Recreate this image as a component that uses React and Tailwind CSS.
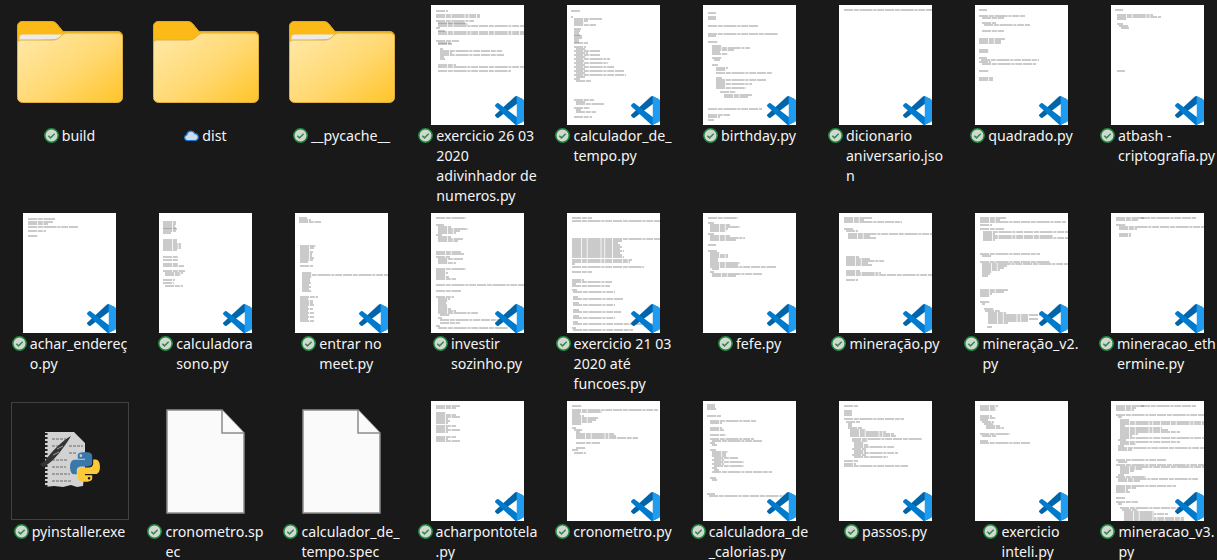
const thumbs = {
    ex26: '5 6 12;5 10 44;5 12 44;5 16 38;7 18 27;7 19 30;7 21 90;5 23 4;7 26 7;7 27 86;7 29 86;5 36 23;7 38 13;7 39 14;9 44 3;9 46 62;9 48 12;9 50 64;9 52 4;9 54 5;7 60 18;7 62 86;7 66 73',
    calcTempo: '4 6 9;4 12 2;7 14 28;7 16 14;7 18 10;7 20 22;7 24 7;7 26 6;7 28 5;7 30 6;7 31 8;7 33 8;7 35 5;7 37 5;7 38 14;7 42 12;9 44 10;7 46 26;9 48 12;7 50 26;9 52 10;7 54 36;9 56 8;7 58 34;9 60 9;7 62 40;9 64 9;7 66 50;9 68 9;7 70 52;9 72 9;7 74 6;9 76 15;7 95 20;9 97 10;9 99 28;7 103 16;9 105 5;9 107 20;7 112 18',
    birthday: '5 8 8;5 12 8;5 14 8;5 21 50;5 29 70;5 31 8;5 37 10;9 41 10;9 43 38;9 45 22;9 47 8;9 49 16;9 53 10;11 55 6;9 60 6;13 63 12;13 65 10;13 68 56;13 73 6;13 75 50;13 77 10;13 79 36;13 81 10;13 83 30;17 87 16;21 90 28;21 92 24;5 104 54;5 110 22;5 112 12;5 115 6',
    dic: '5 5 93',
    quadrado: '4 5 8;4 11 46;7 13 22;7 18 14;9 20 46;7 26 22;4 34 26;4 36 22;4 38 22;4 45 10;4 47 10;4 53 8;6 55 58;4 57 12;7 59 54;4 66 10;4 73 14;4 75 14',
    atbash: '4 5 8;6 10 36;6 12 44;6 14 10;6 19 6;8 21 10;10 23 8;6 66 8',
    achar: '5 6 27;5 9 25;5 11 20;5 14 50;5 18 18;5 23 10',
    sono: '4 9 13;4 11 13;4 13 12;4 15 13;4 16 14;4 18 13;4 20 8;4 27 14;4 29 14;4 31 18;4 33 18;4 35 18;4 37 14;4 44 15;4 47 15;4 51 15;4 53 21;4 58 22;6 60 18;6 62 16;4 67 12;4 70 11;6 73 18',
    meet: '4 5 8;4 7 12;4 9 22;5 33 16;5 35 14;5 37 10;5 39 13;5 41 12;5 43 12;5 45 14;5 47 13;5 49 8;5 53 13;7 60 10;7 62 88;7 64 10;7 66 8;7 68 8;7 70 9;7 72 7;7 74 9;7 76 7;7 78 10;5 84 18;5 86 8;5 88 13;5 90 13;5 92 14;5 94 8;5 96 13;5 98 8;5 100 14;5 102 8;5 104 14;5 106 8;5 108 14',
    investir: '5 5 30;5 12 8;7 14 13;7 16 30;7 18 22;7 20 18;5 22 6;7 24 13;7 26 25;7 28 20;5 39 25;5 41 28;5 44 14;7 46 25;7 48 10;7 50 18;5 56 30;5 58 10;5 60 12;5 62 10;5 64 13;5 66 20;5 72 90;5 78 25;5 84 18;7 86 12;7 88 10;7 90 8;7 92 9;7 94 10;7 96 13;7 98 18;7 100 40;9 102 10;7 105 4;9 107 60;9 110 20;5 113 4;7 115 70',
    ex21: '5 5 20;5 8 93;5 26 93;5 28 50;5 30 46;5 32 48;5 34 50;5 36 48;5 38 52;5 40 48;5 42 50;5 44 52;5 47 60;5 49 58;5 51 3;5 54 72;5 59 20;5 67 12;5 69 40;5 71 4;5 73 38;5 77 5;6 79 42;6 84 5;6 86 50;6 90 6;6 92 42;6 97 6;6 99 48;6 103 6;6 105 42;6 109 5;6 111 90;5 115 4;6 117 60',
    fefe: '5 5 30;5 10 6;7 12 20;7 14 30;7 16 18;7 18 16;5 21 6;7 23 20;7 25 35;7 27 26;5 32 8;5 38 9;7 40 10;7 42 18;7 44 18;7 46 8;7 48 8;7 50 30;7 52 28;7 54 66;9 56 7;7 59 4;9 61 50;9 63 24',
    mineracao: '5 5 28;5 7 20;5 9 58;5 16 10;7 18 12;9 21 86;9 23 22;9 25 28;7 44 13;7 46 24;7 48 38;7 50 22;7 52 26;7 58 14;7 60 35;7 62 86;7 67 12',
    v2: '5 5 26;5 7 20;5 9 86;5 12 12;5 16 24;8 19 86;8 21 12;8 23 70;8 25 86;8 27 12;5 41 60;7 43 10;5 49 70;7 51 88;7 53 25;7 55 22;7 57 18;7 59 10;7 61 8;7 63 6;5 77 28;5 79 24;5 81 12;5 83 10;5 89 10;7 91 3;9 96 10;10 98 15;13 100 18;13 102 60;13 104 40;13 106 50;13 108 40;13 110 20;12 114 5',
    ethermine: '5 5 28;30 5 55;5 7 22;5 12 10;8 14 86;8 16 18;8 21 12;8 23 12',
    acharPonto: '5 5 24;5 7 20;5 12 10;5 14 20;5 16 24;5 18 12;5 20 14;5 22 12;5 25 20;5 27 12;5 29 24;5 31 12;5 36 20;5 38 12;5 40 24',
    crono: '5 5 10;5 9 86;5 11 30;5 13 8;5 15 12;5 17 26;5 19 24;5 21 20;5 23 10;5 27 4;7 29 8;9 31 4;9 33 38;9 35 40;9 37 62;9 42 24;9 47 10;5 49 6;7 52 12',
    calorias: '4 4 8;4 6 8;4 8 10;4 15 14;7 20 46;7 22 12;7 27 12;7 29 14;7 34 16;7 38 44;9 40 50;7 42 5;9 44 5;7 49 6;9 51 16;9 53 14;9 55 14;11 57 24;9 59 12;11 61 30;9 63 12;11 65 30;9 67 5;11 69 5;9 71 60;7 77 6;9 79 5;4 93 8;6 95 90',
    passos: '5 5 14;5 10 8;5 12 8;5 14 8;5 18 60;7 21 14;9 23 4;9 25 4;9 27 14;11 29 16;11 31 36;11 33 44;11 35 46;13 38 70;13 40 16;15 42 10;15 44 14;15 46 40;13 48 14;15 50 12;15 52 44;13 54 14;15 56 34;5 60 14;5 63 12;5 65 64',
    inteli: '5 5 18;5 7 16;5 9 16;5 15 12;5 17 16;5 19 8;7 21 12;9 23 10;11 25 14;11 27 18;5 33 30;7 35 14;5 40 8;5 42 50',
    v3: '5 5 28;30 5 55;5 7 20;5 9 18;5 14 90;7 16 4;9 19 10;9 21 86;9 23 86;9 25 5;9 27 42;9 29 48;9 31 60;9 33 18;9 35 12;9 37 86;7 39 8;9 41 60;9 43 16;7 45 6;7 47 88;7 49 14;5 59 50;7 61 10;5 64 88;9 66 86;9 68 22;9 70 14;9 72 10;7 74 6;5 76 30;7 78 80;7 80 22;5 85 60;5 87 20;5 89 12;5 91 14;5 97 10;5 101 22;7 103 4;9 107 60;11 109 16;13 111 30;13 113 44;13 115 30;13 117 60;13 119 60',
};

const items = [
    { kind: 'folder', paper: true, label: ['build'] },
    { kind: 'folder', label: ['dist'], cloud: true },
    { kind: 'folder', paper: true, label: ['__pycache__'] },
    { kind: 'code', lines: thumbs.ex26, label: ['exercicio 26 03', '2020', 'adivinhador de', 'numeros.py'] },
    { kind: 'code', lines: thumbs.calcTempo, label: ['calculador_de_', 'tempo.py'] },
    { kind: 'code', lines: thumbs.birthday, label: ['birthday.py'] },
    { kind: 'code', lines: thumbs.dic, label: ['dicionario', 'aniversario.jso', 'n'] },
    { kind: 'code', lines: thumbs.quadrado, label: ['quadrado.py'] },
    { kind: 'code', lines: thumbs.atbash, label: ['atbash -', 'criptografia.py'] },
    { kind: 'code', lines: thumbs.achar, label: ['achar_endereç', 'o.py'] },
    { kind: 'code', lines: thumbs.sono, label: ['calculadora', 'sono.py'] },
    { kind: 'code', lines: thumbs.meet, label: ['entrar no', 'meet.py'] },
    { kind: 'code', lines: thumbs.investir, label: ['investir', 'sozinho.py'] },
    { kind: 'code', lines: thumbs.ex21, label: ['exercicio 21 03', '2020 até', 'funcoes.py'] },
    { kind: 'code', lines: thumbs.fefe, label: ['fefe.py'] },
    { kind: 'code', lines: thumbs.mineracao, label: ['mineração.py'] },
    { kind: 'code', lines: thumbs.v2, label: ['mineração_v2.', 'py'] },
    { kind: 'code', lines: thumbs.ethermine, label: ['mineracao_eth', 'ermine.py'] },
    { kind: 'exe', label: ['pyinstaller.exe'] },
    { kind: 'blank', label: ['cronometro.sp', 'ec'] },
    { kind: 'blank', label: ['calculador_de_', 'tempo.spec'] },
    { kind: 'code', lines: thumbs.acharPonto, label: ['acharpontotela', '.py'] },
    { kind: 'code', lines: thumbs.crono, label: ['cronometro.py'] },
    { kind: 'code', lines: thumbs.calorias, label: ['calculadora_de', '_calorias.py'] },
    { kind: 'code', lines: thumbs.passos, label: ['passos.py'] },
    { kind: 'code', lines: thumbs.inteli, label: ['exercicio', 'inteli.py'] },
    { kind: 'code', lines: thumbs.v3, label: ['mineracao_v3.', 'py'] },
];

function Folder({ paper, id }) {
    return (
        <svg className="mb-[5px]" width="106" height="83" viewBox="0 0 106 83">
            <defs>
                <linearGradient id={id} x1="0" y1="0.05" x2="1" y2="0.95">
                    <stop offset="0" stopColor="#ffe9a9" />
                    <stop offset="0.55" stopColor="#ffd870" />
                    <stop offset="1" stopColor="#ffc52c" />
                </linearGradient>
            </defs>
            <path d="M0.5 5a4.5 4.5 0 0 1 4.5-4.5h30a6 6 0 0 1 4.5 2l6.5 8h55a4.5 4.5 0 0 1 4.5 4.500v20h-105z" fill="#fcba19" stroke="#e0a526" />
            {paper && <path d="M2.500 16.500a3 3 0 0 1 3-3h41l-6 4.500-38 2z" fill="#ebebeb" />}
            <path d="M0.500 22a3 3 0 0 1 3-3h32c3 0 5-.8 7-2.500 2-1.700 4-4.500 7-4.500h51a4.500 4.500 0 0 1 5 4.500v60a5 5 0 0 1-5 5h-95a5 5 0 0 1-5-5z" fill={`url(#${id})`} stroke="#dcae43" />
        </svg>
    );
}

function VsCodeIcon() {
    return (
        <svg className="absolute right-0 bottom-0" width="29" height="29" viewBox="0 0 100 100">
            <path d="M96.4614 10.7962L75.8569 0.875542C73.4719 -0.272773 70.6217 0.211611 68.75 2.08333L1.29858 63.5832C-0.515693 65.2373 -0.513607 68.0937 1.30308 69.7452L6.81272 74.754C8.29793 76.1042 10.5347 76.2036 12.1338 74.9905L93.3609 13.3699C96.086 11.3026 100 13.2462 100 16.6667V16.4275C100 14.0265 98.6246 11.8378 96.4614 10.7962Z" fill="#0065a9" />
            <path d="M96.4614 89.2038L75.8569 99.1245C73.4719 100.273 70.6217 99.7884 68.75 97.9167L1.29858 36.4169C-0.515693 34.7627 -0.513607 31.9063 1.30308 30.2548L6.81272 25.246C8.29793 23.8958 10.5347 23.7964 12.1338 25.0095L93.3609 86.6301C96.086 88.6974 100 86.7538 100 83.3334V83.5726C100 85.9735 98.6246 88.1622 96.4614 89.2038Z" fill="#007acc" />
            <path d="M75.8578 99.1263C73.4721 100.274 70.6219 99.7885 68.75 97.9166C71.0564 100.223 75 98.5895 75 95.3278V4.67213C75 1.41039 71.0564 -0.223106 68.75 2.08329C70.6219 0.211402 73.4721 -0.273666 75.8578 0.873633L96.4587 10.7807C98.6234 11.8217 100 14.0112 100 16.4132V83.5871C100 85.9891 98.6234 88.1786 96.4586 89.2196L75.8578 99.1263Z" fill="#1f9cf0" />
        </svg>
    );
}

function CodeThumb({ lines }) {
    // each entry is "x y width" in thumbnail pixels
    const d = lines.split(';').map(l => {
        const [x, y, w] = l.split(' ');
        return `M${x} ${y}h${w}`;
    }).join('');
    return (
        <div className="relative w-[93px] h-[120px] bg-white overflow-hidden">
            <svg className="blur-[0.35px]" width="93" height="120" viewBox="0 0 93 120">
                <path d={d} stroke="#7c7c7c" strokeWidth="0.8" strokeDasharray="9 0.8 5 0.8 13 0.8 3 0.8 7 0.8" fill="none" />
            </svg>
            <VsCodeIcon />
        </div>
    );
}

function BlankFile() {
    return (
        <svg width="79" height="105" viewBox="0 0 79 105">
            <path d="M1 1h55l22 23v80h-77z" fill="#fafafa" stroke="#8c8c8c" strokeWidth="1.500" />
            <path d="M56 1v23h22" fill="#fafafa" stroke="#8c8c8c" strokeWidth="1.500" />
        </svg>
    );
}

function ExeIcon() {
    return (
        <div className="flex items-center justify-center w-[118px] h-[118px] border border-[#404040]">
            <svg className="blur-[0.3px]" width="116" height="116" viewBox="1 1 116 116">
                <path d="M34 30h29l11 11v25l-2 18-6 1-6-2-8 2-9-1-9 1z" fill="#d2d2d2" />
                <path d="M35 31v55" stroke="#222" strokeWidth="3" strokeDasharray="2 2" />
                <path d="M41 37h14M41 44h10M41 58h16M41 65h14M41 72h18M41 79h20M58 44h14M58 51h8M41 51h8" stroke="#8c8c8c" strokeWidth="1.500" strokeDasharray="3 1" />
                <path d="M60 34c-9 5-19 15-26 25l-5 3 3 3c7-3 13-10 17-15 4-5 8-11 11-16z" fill="#343434" />
                <path d="M48 50l-6 3M52 44l-6 3" stroke="#a0a0a0" strokeWidth="1" />
                <svg x="59" y="50" width="30" height="30" viewBox="0 0 256 255">
                    <path d="M126.916.072c-64.832 0-60.784 28.115-60.784 28.115l.072 29.128h61.868v8.745H41.631S.145 61.355.145 126.77c0 65.417 36.21 63.097 36.21 63.097h21.61v-30.356s-1.165-36.21 35.632-36.21h61.362s34.475.557 34.475-33.319V33.97S194.67.072 126.916.072zM92.802 19.66a11.12 11.12 0 0 1 11.13 11.13 11.12 11.12 0 0 1-11.13 11.13 11.12 11.12 0 0 1-11.13-11.13 11.12 11.12 0 0 1 11.13-11.13z" fill="#3a78a8" />
                    <path d="M128.757 254.126c64.832 0 60.784-28.115 60.784-28.115l-.072-29.127H127.6v-8.745h86.441s41.486 4.705 41.486-60.712c0-65.416-36.21-63.096-36.21-63.096h-21.61v30.355s1.165 36.21-35.632 36.21h-61.362s-34.475-.557-34.475 33.32v56.013s-5.235 33.897 62.518 33.897zm34.114-19.586a11.12 11.12 0 0 1-11.13-11.13 11.12 11.12 0 0 1 11.13-11.131 11.12 11.12 0 0 1 11.13 11.13 11.12 11.12 0 0 1-11.13 11.13z" fill="#fdc936" />
                </svg>
            </svg>
        </div>
    );
}

function SyncedIcon() {
    return (
        <svg className="flex-none mt-[2px]" width="15" height="15" viewBox="0 0 15 15">
            <circle cx="7.500" cy="7.500" r="6.700" fill="#d4d6d4" stroke="#1e8a3c" strokeWidth="1.500" />
            <path d="M4.300 7.700l2.200 2.200 4.200-4.200" fill="none" stroke="#2a8f45" strokeWidth="1.500" />
        </svg>
    );
}

function CloudIcon() {
    return (
        <svg className="flex-none mt-[2px]" width="15" height="15" viewBox="0 0 15 15">
            <path d="M3.200 12.500a2.900 2.900 0 0 1-.4-5.700 4.200 4.200 0 0 1 8-1.200 3.500 3.500 0 0 1 .8 6.900z" fill="#cfdcee" stroke="#1878d0" strokeWidth="1.200" />
        </svg>
    );
}

function FileItem({ item, index }) {
    return (
        <div className="flex flex-col items-center">
            <div className="flex items-center justify-center w-full h-[120px]">
                {item.kind === 'folder' && <Folder paper={item.paper} id={`folder-${index}`} />}
                {item.kind === 'code' && <CodeThumb lines={item.lines} />}
                {item.kind === 'exe' && <ExeIcon />}
                {item.kind === 'blank' && <BlankFile />}
            </div>
            <div className="flex gap-[3px] justify-center mt-[1px] -mb-[1px] text-[14.2px] leading-5 text-[#f4f4f4]">
                {item.cloud ? <CloudIcon /> : <SyncedIcon />}
                <div className="whitespace-nowrap">
                    {item.label.map(line => <div key={line}>{line}</div>)}
                </div>
            </div>
        </div>
    );
}

export default function App() {
    return (
        <div className="h-[560px] overflow-hidden bg-[#191919] font-['Noto_Sans',sans-serif]">
            <div className="grid grid-cols-[repeat(9,136px)] items-start gap-y-2 pt-[5px] pl-[1.5px]">
                {items.map((item, i) => <FileItem key={i} item={item} index={i} />)}
            </div>
        </div>
    );
}
